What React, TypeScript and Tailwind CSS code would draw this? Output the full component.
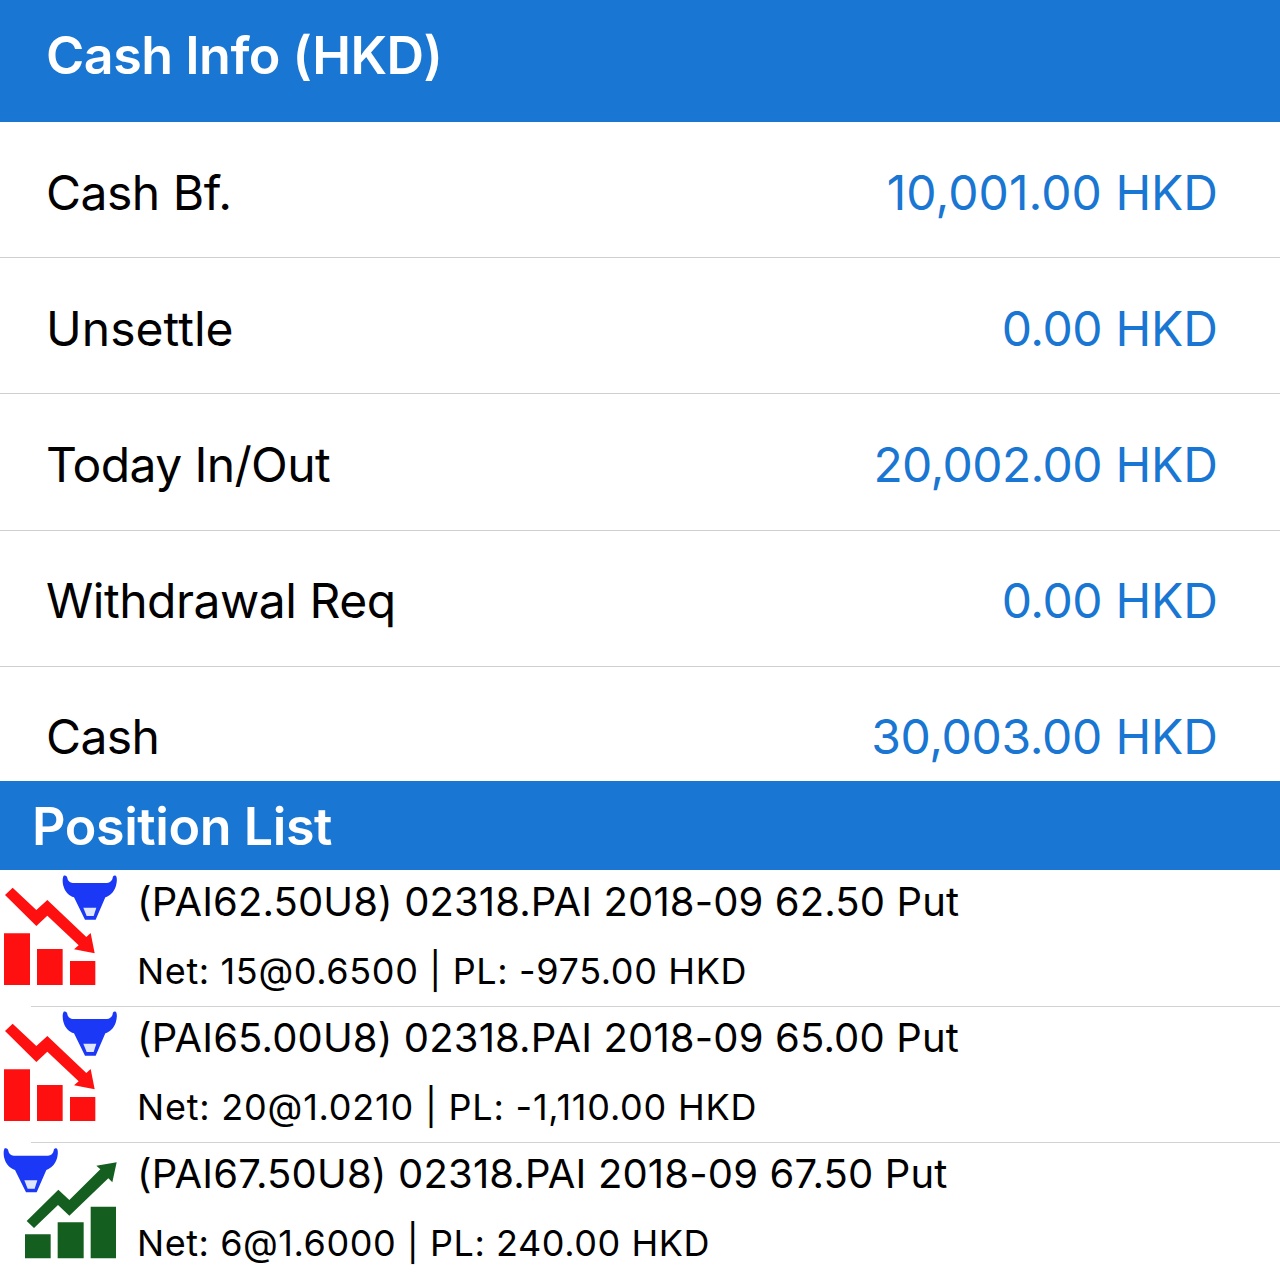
const cash = [
  { label: 'Cash Bf.', amount: '10,001.00', row: 'h-[136px] pt-[36px]', ls: 'tracking-[-0.5px]', vs: 'tracking-[0.08px]' },
  { label: 'Unsettle', amount: '0.00', row: 'h-[136px] pt-[36px]', ls: 'tracking-[0.05px]', vs: 'tracking-[-0.5px]' },
  { label: 'Today In/Out', amount: '20,002.00', row: 'h-[137px] pt-[36px]', ls: 'tracking-[-0.62px]', vs: 'tracking-[-0.6px]' },
  { label: 'Withdrawal Req', amount: '0.00', row: 'h-[136px] pt-[35px]', ls: 'tracking-[-0.48px]', vs: 'tracking-[-0.5px]' },
  { label: 'Cash', amount: '30,003.00', row: 'h-[136px] pt-[35px]', ls: 'tracking-[-0.6px]', vs: 'tracking-[-0.33px]' },
];

const positions = [
  { title: '(PAI62.50U8) 02318.PAI 2018-09 62.50 Put', detail: 'Net: 15@0.6500 | PL: -975.00 HKD', up: false, ts: 'tracking-[0.12px]', ds: 'tracking-[0.64px]' },
  { title: '(PAI65.00U8) 02318.PAI 2018-09 65.00 Put', detail: 'Net: 20@1.0210 | PL: -1,110.00 HKD', up: false, ts: 'tracking-[0.15px]', ds: 'tracking-[0.79px]' },
  { title: '(PAI67.50U8) 02318.PAI 2018-09 67.50 Put', detail: 'Net: 6@1.6000 | PL: 240.00 HKD', up: true, ts: 'tracking-[0.17px]', ds: 'tracking-[0.55px]' },
];

function Bull() {
  return (
    <>
      <path fill="#1a38f5" d="M191 29C197 27 201 30 202 36C203 45 210 50 218 51H321C330 50 337 44 338 36C338 30 343 27 348 30C352 36 351 50 347 62C341 79 330 89 316 94L287 161H255L222 94C207 89 196 78 191 62C187 50 187 35 191 29Z" />
      <path fill="#dfe5fc" d="M250 125H289L281 150H260Z" />
    </>
  );
}

function TrendIcon({ up }: { up: boolean }) {
  return (
    <svg className="block h-[130px] w-[130px] shrink-0" viewBox="0 0 390 390">
      {up ? (
        <g transform="translate(0 -5)">
          <g transform="translate(-177 7)"><Bull /></g>
          <path fill="#145f20" d="M80 254L175 160L208 191L301 99L289 88L350 78L337 138L325 126L208 238L174 206L102 275ZM75 294H152V366H75ZM173 258H251V366H173ZM272 211H348V366H272Z" />
        </g>
      ) : (
        <>
          <Bull />
          <path fill="#ff1010" d="M15 87L38 65L109 132L142 102L259 213L272 201L284 262L222 250L236 238L142 149L109 180ZM12 202H90V357H12ZM111 249H188V357H111ZM210 285H286V357H210Z" />
        </>
      )}
    </svg>
  );
}

export default function App() {
  return (
    <div className="flex h-[1280px] w-[1280px] flex-col overflow-hidden whitespace-pre bg-white font-['Inter',sans-serif] text-black">
      <header className="h-[122px] shrink-0 bg-[#1976d2] pl-[46px] pt-[21px] text-[52px] font-semibold leading-[70px] tracking-[-0.5px] text-white">Cash Info (HKD)</header>
      <section className="h-[659px] shrink-0 overflow-hidden">
        {cash.map((c) => (
          <div key={c.label} className={`flex justify-between border-b border-[#cfcfcf] pl-[46px] pr-[62px] text-[48px] leading-[70px] ${c.row}`}>
            <span className={c.ls}>{c.label}</span>
            <span className="text-[#1976d2]"><span className={c.vs}>{c.amount}</span> HKD</span>
          </div>
        ))}
      </section>
      <header className="h-[89px] shrink-0 bg-[#1976d2] pl-[32px] pt-[11px] text-[52px] font-semibold leading-[70px] tracking-[-0.42px] text-white">Position List</header>
      {positions.map((p) => (
        <article key={p.title} className="relative flex h-[136px] shrink-0 items-start">
          <div className="-mt-1 h-[130px] w-[137px] shrink-0"><TrendIcon up={p.up} /></div>
          <div className="pt-[2px]">
            <div className="text-[40px] leading-[60px]"><span className={p.ts}>{p.title}</span></div>
            <div className="pt-[9px] text-[36px] leading-[60px]"><span className={p.ds}>{p.detail}</span></div>
          </div>
          {!p.up && <div className="absolute bottom-[-1px] left-[31px] right-0 h-px bg-[#d2d2d2]" />}
        </article>
      ))}
    </div>
  );
}
